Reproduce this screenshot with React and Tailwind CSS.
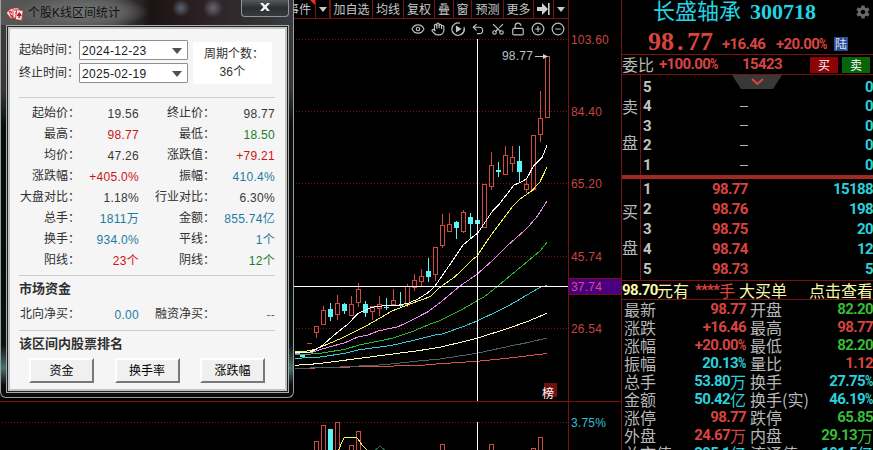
import React from "react";
import { Hand, Undo2, Scissors, LockOpen, CirclePlus, CircleMinus, Eye } from "lucide-react";
import { IoMdSettings } from "react-icons/io";

const RED = "#d04a44";
const CYAN = "#5cf5f5";

// [kind, bodyTop, bodyBottom, wickTop, wickBottom], seven pixels apart
const candles = [
  ["r", 326.5, 332.5, 326, 338],
  ["r", 310.5, 324.5, 306, 324],
  ["c", 309, 317, 303, 321],
  ["r", 303.5, 314.5, 295, 320],
  ["c", 304, 311, 303, 314],
  ["r", 304.5, 315.5, 296, 316],
  ["r", 289.5, 302.5, 283, 307],
  ["c", 304, 313, 301, 317],
  ["r", 306.5, 311.5, 306, 320],
  ["r", 304.5, 308.5, 296, 316],
  ["c", 307, 308, 298, 310],
  ["r", 300.5, 304.5, 289, 304],
  ["c", 305, 306, 292, 307],
  ["r", 286.5, 304.5, 284, 307],
  ["r", 280.5, 287.5, 274, 291],
  ["r", 276.5, 281.5, 269, 286],
  ["c", 271, 277, 258, 282],
  ["r", 247.5, 274.5, 247, 281],
  ["r", 225.5, 245.5, 214, 248],
  ["r", 224.5, 231.5, 213, 232],
  ["c", 222, 228, 221, 239],
  ["r", 212.5, 231.5, 210, 233],
  ["c", 217, 224, 213, 239],
  ["c", 220, 224, 220, 224],
  ["r", 184.5, 227.5, 184, 228],
  ["r", 165.5, 186.5, 152, 190],
  ["c", 170, 172, 162, 177],
  ["r", 155.5, 174.5, 146, 175],
  ["r", 157.5, 163.5, 146, 172],
  ["c", 161, 172, 146, 183],
  ["r", 184.5, 189.5, 178, 193],
  ["r", 135.5, 189.5, 135, 191],
  ["r", 118.5, 134.5, 91, 142],
  ["r", 56.5, 117.5, 56, 118],
];

const volumes = [
  [0, 441.5, "r"],
  [1, 425.5, "r"],
  [2, 429.5, "c"],
  [3, 422.5, "r"],
  [5, 445.5, "r"],
  [6, 431.5, "r"],
  [18, 444.5, "r"],
  [25, 444.5, "r"],
  [31, 448.5, "r"],
  [32, 437.5, "r"],
];

const averages = [
  ["#d8504c", "295,368.7 335,367.3 385,366.3 425,365 440,363.7 477,361.3 507,358.3 547,353.5"],
  ["#4c6468", "295,368.5 340,367 385,364.7 418,361 440,359 477,353.3 507,346.7 527,342.7 547,338"],
  ["#ffffc0", "295,365.3 318,363.7 352,359.3 385,355 418,350.7 440,347.3 477,338.3 507,328.7 527,321.7 547,313.3"],
  ["#3cc8dc", "295,358.3 318,357.3 345,353.3 358,350 392,345.3 418,339.3 435,335 440,334.7 463,326.7 477,321 507,306.7 527,295 540,287.3 547,285.5"],
  ["#30b830", "295,354.7 318,353.7 345,349.3 358,345.3 392,338.3 412,331.7 432,323.3 440,320.7 460,310.7 477,300.7 483,297.7 497,286.7 540,251 547,242.3"],
  ["#f08cf0", "295,353.3 312,352.3 322,349 345,342.7 357,337.3 368,335 378,331 398,326.7 412,320 428,311.7 440,302.7 460,286 477,274.3 493,260 510,243.3 527,228.3 537,216.7 547,201"],
  ["#f8f850", "295,351 307,351 315,349.3 328,344 345,336.7 365,326.7 392,311 412,303.3 430,296.7 440,287.3 455,276.7 472,260 477,256 490,236.7 500,223.3 512,207.3 520,199 532,190.7 540,181.7 547,167.3"],
  ["#ffffff", "295,352.5 310,352 315,350 322,345.7 335,334.3 348,324 358,313.3 364,310.7 372,307.3 385,305.7 398,305.3 408,303.3 418,299 428,292.7 435,286 442,276 453,260 463,245 473,236.7 478,232.7 492,211.7 498,205.7 514,185 522,181.7 527,178.3 533,166.7 542,157.7 547,145.3"],
];

function Num({ children, className = "" }) {
  const parts = String(children).split(/([%+])/);
  return (
    <span className={`inline-flex whitespace-pre font-['Roboto','Liberation_Sans',sans-serif] text-[15px] font-bold tracking-[-0.6px] ${className}`}>
      {parts.map((p, i) =>
        p === "%" ? (
          <span key={i} className="w-[8px]">
            <span className="inline-block origin-left scale-x-[0.75]">%</span>
          </span>
        ) : (
          p && <span key={i}>{p}</span>
        )
      )}
    </span>
  );
}

function Tool({ w, children }) {
  return (
    <div className={`flex h-[18px] shrink-0 items-center justify-center border-r border-[#7a1010] ${w}`}>
      {children}
    </div>
  );
}

const Caret = () => (
  <svg width="8" height="5" className="fill-[#c8c8c8]">
    <path d="M0 0h8L4 5z" />
  </svg>
);

function Toolbar() {
  return (
    <div className="flex h-[19px] justify-end whitespace-nowrap border-b border-[#7a1010] text-[12px] leading-[18px] text-[#c8c8c8]">
      <div className="relative flex w-[60px] shrink-0 justify-end border-r border-[#7a1010] pr-1">
        事件
        <svg width="5" height="5" className="absolute right-0 top-0 fill-[#f03020]">
          <path d="M0 0h5v5z" />
        </svg>
      </div>
      <Tool w="w-[14px]"><Caret /></Tool>
      <Tool w="w-[43px] border-l">加自选</Tool>
      <Tool w="w-[31px]">均线</Tool>
      <Tool w="w-[31px]">复权</Tool>
      <Tool w="w-[19px]">叠</Tool>
      <Tool w="w-[18px]">窗</Tool>
      <Tool w="w-[32px]">预测</Tool>
      <Tool w="w-[30px]">更多</Tool>
      <Tool w="w-[20px]">
        <svg width="13" height="12" className="fill-[#d0d0d0]">
          <path d="M0 4h5V0l6 6-6 6V8H0zM11 0h1.6v12H11z" />
        </svg>
      </Tool>
      <div className="flex w-[14px] shrink-0 items-center justify-center"><Caret /></div>
    </div>
  );
}

function Chart() {
  return (
    <svg width="568" height="450" viewBox="0 0 568 450" className="block" fill="none">
      <g stroke="#781818" strokeDasharray="1 2">
        {[39.5, 111.5, 183.5, 256.5, 328.5].map((y) => (
          <path key={y} d={`M296 ${y}H568`} />
        ))}
        <path d="M2 422.5H568" />
      </g>
      <path d="M0 401.5H568" stroke="#7a1010" />
      <g shapeRendering="crispEdges">
        <path d="M307 343.5h5" stroke={RED} />
        <path d="M300 355h5v2h-5z" fill={CYAN} />
        <path d="M477.5 203v30" stroke={RED} />
        {candles.map(([k, t, b, wt, wb], i) => {
          const x = 316.5 + i * 7;
          return k === "r" ? (
            <g key={i} stroke={RED}>
              <path d={`M${x} ${wt}V${t}M${x} ${b}V${wb}`} />
              <rect x={x - 2} y={t} width="4" height={b - t} />
            </g>
          ) : (
            <g key={i}>
              <path d={`M${x} ${wt}V${wb}`} stroke={CYAN} />
              <rect x={x - 2.5} y={t} width="5" height={b - t} fill={CYAN} />
            </g>
          );
        })}
        {volumes.map(([i, t, k]) => (
          <rect key={i} x={314.5 + i * 7} y={t} width="4" height="40" stroke={k === "r" ? RED : CYAN} fill={k === "r" ? "none" : CYAN} />
        ))}
        {averages.map(([c, p]) => (
          <polyline key={c} points={p} stroke={c} />
        ))}
        <path d="M338.5 450l5.5-12.3h13l5 7.3 5 5" stroke="#f8f850" />
        <path d="M375 450l5-3.5 5 3.5" stroke="#2c6840" />
        <path d="M294 286.5H568M477.5 39V401M477.5 422V450" stroke="#fff" />
      </g>
      <path d="M475 220h2v4h-2zM478 220h2v4h-2z" fill={CYAN} />
      <path d="M535 56.5h9" stroke="#c0c4c4" />
      <path d="M543 54l5 2.5-5 2.5z" fill="#d0d4d4" />
    </svg>
  );
}

function ChartIcons() {
  const p = { size: 14, strokeWidth: 2, color: "#c0c0c0" };
  return (
    <div className="absolute right-[3px] top-[22px] flex gap-[6px]">
      <Eye {...p} />
      <Hand {...p} />
      <svg width="14" height="14" viewBox="0 0 14 14" fill="none" stroke="#c0c0c0" strokeWidth="1.2">
        <path d="M9 1.2A6.2 6.2 0 1 0 12.9 5" />
        <path d="M9.3 12.8A6.2 6.2 0 0 0 13.2 7" />
        <path d="M5.5 4.5l4 2.5-4 2.5z" fill="#d0d0d0" />
      </svg>
      <Undo2 {...p} />
      <Scissors {...p} className="-rotate-90" />
      <LockOpen {...p} />
      <CirclePlus {...p} />
      <CircleMinus {...p} />
    </div>
  );
}

const axis = [
  ["103.60", "mt-[31px]"],
  ["84.40", "mt-[54px]"],
  ["65.20", "mt-[54px]"],
  ["45.74", "mt-[55px]"],
];

function Axis() {
  return (
    <div className="flex h-[450px] w-[53px] shrink-0 flex-col border-l border-[#7a1010] font-['Liberation_Sans',sans-serif] text-[12px] tracking-[0.2px] text-[#c84440]">
      {axis.map(([t, m]) => (
        <div key={t} className={`h-[18px] shrink-0 pl-[2px] leading-[18px] ${m}`}>{t}</div>
      ))}
      <div className="mt-[12px] h-[17px] shrink-0 border-y border-[#7a1010] bg-[#480080] pl-[2px] leading-[16px] text-[#e04878]">37.74</div>
      <div className="mt-[25px] h-[18px] shrink-0 pl-[2px] leading-[18px]">26.54</div>
      <div className="mt-[63px] h-[13px] shrink-0 border-t border-[#7a1010]" />
      <div className="h-[18px] shrink-0 pl-[2px] leading-[18px] text-[#30c0d0]">3.75%</div>
    </div>
  );
}

const g = "text-[#383838]";
const r = "text-[#cc1420]";
const n = "text-[#187c28]";
const b = "text-[#1c7ca0]";
const stats = [
  ["起始价：", "19.56", g, "终止价：", "98.77", g],
  ["最高：", "98.77", r, "最低：", "18.50", n],
  ["均价：", "47.26", g, "涨跌值：", "+79.21", r],
  ["涨跌幅：", "+405.0%", r, "振幅：", "410.4%", b],
  ["大盘对比：", "1.18%", g, "行业对比：", "6.30%", g],
  ["总手：", "1811万", b, "金额：", "855.74亿", b],
  ["换手：", "934.0%", b, "平线：", "1个", b],
  ["阳线：", "23个", r, "阴线：", "12个", n],
];

function StatRow({ row }) {
  const [l1, v1, c1, l2, v2, c2] = row;
  return (
    <div className="flex h-[21px] items-center whitespace-nowrap leading-[20px]">
      <span className="w-[61px] text-right">{l1}</span>
      <span className={`w-[59px] pt-[2px] text-right tracking-[0.3px] ${c1}`}>{v1}</span>
      <span className="w-[76px] text-right">{l2}</span>
      <span className={`w-[60px] pt-[2px] text-right tracking-[0.3px] ${c2}`}>{v2}</span>
    </div>
  );
}

function DateRow({ label, value }) {
  return (
    <div className="flex h-[20px] items-center">
      <span className="w-[60px] whitespace-nowrap">{label}</span>
      <div className="flex h-[20px] w-[109px] items-center justify-between rounded-[1px] border border-[#909090] bg-white pl-[2px] pr-[5px] pt-px tracking-[0.3px] text-[#202020]">
        {value}
        <svg width="10" height="6" className="fill-[#505050]">
          <path d="M0 0h10L5 6z" />
        </svg>
      </div>
    </div>
  );
}

function PushButton({ children }) {
  return (
    <div className="flex h-[25px] w-[65px] items-center justify-center border-2 border-b-[#787878] border-l-white border-r-[#787878] border-t-white bg-[#f0f0f0] text-black">
      {children}
    </div>
  );
}

function Dialog() {
  return (
    <div className="absolute left-0 top-0 flex h-[398px] w-[294px] flex-col overflow-hidden rounded-b-[6px] border border-t-0 border-[#9a9e9e] bg-[linear-gradient(180deg,#3c3e3e_0px,#363838_90px,#0a0e0e_125px,#080c0c_270px,#0c1212_345px,#46746c_368px,#100c0e_385px,#080a0a_398px)] font-['Liberation_Sans','Noto_Sans_CJK_SC',sans-serif] text-[12px] text-[#303030]">
      <div className="flex h-[25px] shrink-0 items-start justify-between bg-[radial-gradient(ellipse_70px_18px_at_78px_12px,#747676_0%,#606262_60%,transparent_100%),radial-gradient(circle_at_180px_8px,#5c6470_0px,transparent_9px),radial-gradient(circle_at_212px_8px,#66666e_0px,transparent_10px),linear-gradient(90deg,#555757_0px,#4a4a4a_110px,#1c1414_150px,#2c2022_200px,#302c2e_240px,#383c40_294px)]">
        <div className="flex items-center pl-[6px] pt-[5px] leading-[16px] text-[#101010]">
          <svg width="17" height="15" viewBox="0 0 17 15" className="mr-[4px]">
            <g stroke="#c03038" strokeWidth="0.8" fill="#f6e4e4">
              <rect x="1" y="4" width="6" height="8" rx="1" transform="rotate(-38 4 8)" />
              <rect x="3" y="2.5" width="6" height="9" rx="1" transform="rotate(-20 6 7)" />
              <rect x="6" y="2" width="6" height="10" rx="1" />
              <rect x="9" y="4" width="6.5" height="10" rx="1" transform="rotate(8 12 9)" />
            </g>
            <path d="M3 5l2 2M4 9l2 2M7 4h3M8 7h2" stroke="#d02028" strokeWidth="1.2" />
            <path d="M12.3 6l2.4 3.2q0 1.5-2 .8l.6 2h-2l.6-2q-2 .7-2-.8z" fill="#b01820" />
          </svg>
          个股K线区间统计
        </div>
        <div className="mr-[4px] flex h-[17px] w-[48px] items-center justify-center rounded-b-[4px] border border-t-0 border-[#909496] bg-[linear-gradient(180deg,#56585c,#2c2e30_50%,#383c3e)] pb-[3px]">
          <svg width="10" height="8" viewBox="0 0 10 8">
            <path d="M0 0h3l2 2.3L7 0h3L6.6 4 10 8H7L5 5.7 3 8H0l3.4-4z" fill="#f4f4f4" />
          </svg>
        </div>
      </div>
      <div className="ml-[5px] h-[368px] w-[283px] shrink-0 border border-[#a8acac] bg-[#202222] p-px">
        <div className="h-full border-2 border-[#c4c4c4] bg-[#f5f5f5] px-[9px] pt-[11px]">
          <div className="flex">
            <div className="flex flex-col gap-[3px]">
              <DateRow label="起始时间：" value="2024-12-23" />
              <DateRow label="终止时间：" value="2025-02-19" />
            </div>
            <div className="ml-[5px] mt-[2px] flex h-[42px] w-[79px] flex-col items-center rounded-[2px] bg-white pt-[3px] leading-[18px]">
              <span className="whitespace-nowrap pl-[3px]">周期个数：</span>
              <span className="tracking-[0.3px]">36个</span>
            </div>
          </div>
          <div className="mb-[4px] mt-[13px] h-px w-[256px] bg-[#cccccc]" />
          {stats.map((row) => (
            <StatRow key={row[0]} row={row} />
          ))}
          <div className="mt-[5px] h-px w-[256px] bg-[#cccccc]" />
          <div className="mt-[4px] h-[18px] text-[13px] font-bold leading-[18px]">市场资金</div>
          <div className="mt-[5px]">
            <StatRow row={["北向净买：", "0.00", b, "融资净买：", "--", b]} />
          </div>
          <div className="mt-[6px] h-px w-[256px] bg-[#cccccc]" />
          <div className="mt-[4px] h-[18px] text-[13px] font-bold leading-[18px]">该区间内股票排名</div>
          <div className="ml-[10px] mt-[5px] flex w-[236px] justify-between">
            <PushButton>资金</PushButton>
            <PushButton>换手率</PushButton>
            <PushButton>涨跌幅</PushButton>
          </div>
        </div>
      </div>
    </div>
  );
}

const R = "text-[#d84440]";
const G = "text-[#38bc38]";
const C = "text-[#2cd0dc]";
const quotes = [
  ["最新", "98.77", "", R, "开盘", "82.20", "", G],
  ["涨跌", "+16.46", "", R, "最高", "98.77", "", R],
  ["涨幅", "+20.00%", "", R, "最低", "82.20", "", G],
  ["振幅", "20.13%", "", C, "量比", "1.12", "", R],
  ["总手", "53.80", "万", C, "换手", "27.75%", "", C],
  ["金额", "50.42", "亿", C, "换手(实)", "46.19%", "", C],
  ["涨停", "98.77", "", R, "跌停", "65.85", "", G],
  ["外盘", "24.67", "万", R, "内盘", "29.13", "万", G],
  ["总市值", "295.1", "亿", C, "流通值", "191.5", "亿", C],
];

function Side({ chars, h, pt, gap }) {
  return (
    <div className={`flex w-[19px] shrink-0 flex-col items-center border-r border-[#7a1010] pr-[2px] text-[16px] leading-[18px] text-[#b8b8b8] ${h} ${pt} ${gap}`}>
      <span>{chars[0]}</span>
      <span>{chars[1]}</span>
    </div>
  );
}

function QuotePanel() {
  return (
    <div className="h-[450px] w-[252px] shrink-0 overflow-hidden whitespace-nowrap border-l border-[#7a1010]">
      <div className="flex h-[26px] items-center pb-[2px] pl-[31px] font-['Liberation_Serif','Noto_Sans_CJK_SC',serif] text-[22px] leading-[24px] text-[#20d4e4]">
        <span>长盛轴承</span>
        <span className="ml-[9px] font-bold">300718</span>
        <IoMdSettings size={16} className="ml-auto mr-[2px] text-[#686868]" />
      </div>
      <div className={`flex h-[29px] items-center border-b border-[#7a1010] ${R}`}>
        <div className="flex w-[75px] pl-[26px] pt-[4px] font-['Liberation_Serif',serif] text-[26px] font-bold leading-[24px]">
          <span>98</span>
          <span className="w-[13px] shrink-0 pl-[3px]">.</span>
          <span>77</span>
        </div>
        <Num className="ml-[25px] w-[54px] pt-[8px]! leading-[16px]">+16.46</Num>
        <Num className="w-[58px] pt-[8px] leading-[16px]">+20.00%</Num>
        <div className="mt-[8px] flex size-[14px] items-center justify-center bg-[#2c4c98] text-[12px] leading-[14px] text-[#d8e0f0]">陆</div>
      </div>
      <div className={`flex h-[20px] items-center border-b border-[#7a1010] ${R}`}>
        <span className="w-[37px] text-[16px] leading-[19px] text-[#b8b8b8]">委比</span>
        <Num className="w-[83px]">+100.00%</Num>
        <Num className="w-[68px]">15423</Num>
        <div className="flex h-[16px] w-[28px] items-center justify-center bg-[#8c0404] text-[12px] leading-[16px] text-white">买</div>
        <div className="ml-[4px] flex h-[16px] w-[28px] items-center justify-center bg-[#086408] text-[12px] leading-[16px] text-white">卖</div>
      </div>
      <div className="relative flex h-[100px]">
        <Side chars="卖盘" h="h-[100px]" pt="pt-[22px]" gap="gap-[18px]" />
        <div className="flex flex-1 flex-col pt-[2px]">
          {[5, 4, 3, 2, 1].map((k) => (
            <div key={k} className="flex h-[19.6px] items-center">
              <Num className="w-[99px] pl-[2px] text-[#c4c4c4]">{k}</Num>
              {k < 5 && <span className="h-px w-[8px] bg-[#b8b8b8]" />}
              <Num className={`ml-auto ${C}`}>0</Num>
            </div>
          ))}
        </div>
        <svg width="50" height="14" className="absolute left-[110px] top-0">
          <path d="M0 0h50l-9 14H9z" fill="#383838" />
          <path d="M20 4l5.5 5L31 4" fill="none" stroke="#e04440" strokeWidth="2" />
        </svg>
      </div>
      <div className="h-[4px] bg-[#a42822]" />
      <div className="flex h-[101px]">
        <Side chars="买盘" h="h-[101px]" pt="pt-[23px]" gap="gap-[18px]" />
        <div className="flex flex-1 flex-col">
          {[["1", "98.77", "15188"], ["2", "98.76", "198"], ["3", "98.75", "20"], ["4", "98.74", "12"], ["5", "98.73", "5"]].map(([k, p, v]) => (
            <div key={k} className="flex h-[20px] items-center">
              <Num className="w-[71px] pl-[2px] text-[#c4c4c4]">{k}</Num>
              <Num className={R}>{p}</Num>
              <Num className={`ml-auto ${C}`}>{v}</Num>
            </div>
          ))}
        </div>
      </div>
      <div className="flex h-[20px] items-center border-y border-[#7a1010] text-[16px] leading-[18px] text-[#f8f8a8]">
        <Num className="w-[35px] shrink-0">98.70</Num>
        <span>元有</span>
        <Num className={`ml-[6px] w-[24px] shrink-0 tracking-[-0.8px]! ${R}`}>****</Num>
        <span className={R}>手</span>
        <span className="ml-[4px]">大买单</span>
        <span className="ml-auto">点击查看</span>
      </div>
      {quotes.map(([l1, v1, u1, c1, l2, v2, u2, c2]) => (
        <div key={l1} className="flex h-[18px] items-center text-[16px] leading-[18px] text-[#b8b8b8]">
          <div className="flex w-[124px] items-center justify-between pl-[2px]">
            <span>{l1}</span>
            <span className={`flex items-center ${c1}`}><Num>{v1}</Num>{u1}</span>
          </div>
          <div className="flex w-[127px] items-center justify-between pl-[4px]">
            <span>{l2}</span>
            <span className={`flex items-center ${c2}`}><Num>{v2}</Num>{u2}</span>
          </div>
        </div>
      ))}
    </div>
  );
}

export default function App() {
  return (
    <div className="relative flex h-[450px] w-[873px] overflow-hidden bg-black font-['Noto_Sans_CJK_SC',sans-serif]">
      <div className="relative h-[450px] w-[568px] shrink-0">
        <Toolbar />
        <div className="-mt-[19px]">
          <Chart />
        </div>
        <ChartIcons />
        <span className="absolute left-[502px] top-[48px] font-['Liberation_Sans',sans-serif] text-[12px] leading-[16px] tracking-[0.2px] text-[#b8c0c0]">98.77</span>
        <div className="absolute left-[544px] top-[383px] h-[14px] w-[13px] bg-[#701010]" />
        <span className="absolute left-[542px] top-[386px] text-[12px] leading-[14px] text-white">榜</span>
      </div>
      <Axis />
      <QuotePanel />
      <Dialog />
    </div>
  );
}
